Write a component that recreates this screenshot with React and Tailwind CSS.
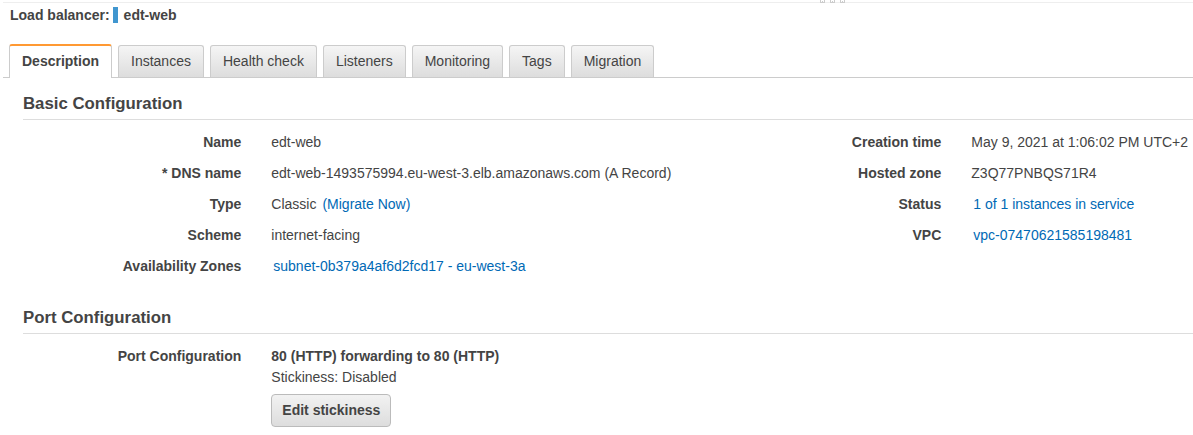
const tabs = ["Instances", "Health check", "Listeners", "Monitoring", "Tags", "Migration"];

function Link({ children, className = "ml-[2px]" }) {
  return <a href="#" className={`${className} text-[#0069b5]`}>{children}</a>;
}

function Row({ label, children }) {
  return (
    <div className="flex h-[31px] items-center gap-[30px] whitespace-nowrap">
      <dt className="w-[218.3px] shrink-0 text-right font-bold">{label}</dt>
      <dd>{children}</dd>
    </div>
  );
}

function Heading({ children }) {
  return (
    <h2 className="flex h-8 items-center border-b border-[#dddddd] text-[16.8px] font-bold">{children}</h2>
  );
}

function Grip() {
  return (
    <svg className="absolute top-0 left-[820px]" width="25" height="3" shapeRendering="crispEdges">
      {[0, 10, 20].map((x) => (
        <path key={x} d={`M${x} 0h1v2h1v-1h1v1h1v-2h1v3h-5z`} fill="#cccccc" />
      ))}
    </svg>
  );
}

export default function App() {
  return (
    <div className="relative h-[435px] w-full overflow-hidden bg-white font-['Liberation_Sans',Arial,sans-serif] text-sm leading-5 text-[#444444]">
      <div className="ml-[3px] h-[3px] border-b border-[#eeeeee]" />
      <Grip />
      <header className="flex h-6 items-center pl-[10px] font-bold">
        <span>Load balancer:</span>
        <span className="mr-[6px] ml-[3px] h-4 w-[5px] bg-[#4096cf]" />
        <span>edt-web</span>
      </header>

      <nav className="mt-[17px] ml-[3px] flex h-[34px] items-end gap-[6px] border-b border-[#cccccc] pl-[6px]">
        <button className="-mb-px h-[34px] rounded-t-[3px] border-x border-t-2 border-x-[#cccccc] border-t-[#ff9933] bg-white px-3 pb-[2px] font-bold">
          Description
        </button>
        {tabs.map((tab) => (
          <button
            key={tab}
            className="h-8 rounded-t-[3px] border-x border-t border-[#cccccc] bg-linear-to-b from-[#f5f5f5] to-[#dddddd] px-3 pb-[2px]"
          >
            {tab}
          </button>
        ))}
      </nav>

      <main className="pt-[10px] pl-[23px]">
        <section>
          <Heading>Basic Configuration</Heading>
          <div className="flex pt-[6px]">
            <dl className="w-[700px] shrink-0">
              <Row label="Name">edt-web</Row>
              <Row label="* DNS name">edt-web-1493575994.eu-west-3.elb.amazonaws.com (A Record)</Row>
              <Row label="Type">Classic<Link className="ml-[6px]">(Migrate Now)</Link></Row>
              <Row label="Scheme">internet-facing</Row>
              <Row label="Availability Zones"><Link>subnet-0b379a4af6d2fcd17 - eu-west-3a</Link></Row>
            </dl>
            <dl>
              <Row label="Creation time">May 9, 2021 at 1:06:02 PM UTC+2</Row>
              <Row label="Hosted zone">Z3Q77PNBQS71R4</Row>
              <Row label="Status"><Link>1 of 1 instances in service</Link></Row>
              <Row label="VPC"><Link>vpc-07470621585198481</Link></Row>
            </dl>
          </div>
        </section>

        <section className="mt-[21px]">
          <Heading>Port Configuration</Heading>
          <div className="flex gap-[30px] pt-3">
            <div className="w-[218.3px] text-right font-bold">Port Configuration</div>
            <div>
              <div className="font-bold">80 (HTTP) forwarding to 80 (HTTP)</div>
              <div className="mt-px">Stickiness: Disabled</div>
              <button className="mt-[7px] h-[33px] rounded-[4px] border border-[#bbbbbb] bg-linear-to-b from-[#f2f2f2] to-[#dddddd] px-[10px] pb-[2px] font-bold">
                Edit stickiness
              </button>
            </div>
          </div>
        </section>
      </main>
    </div>
  );
}
